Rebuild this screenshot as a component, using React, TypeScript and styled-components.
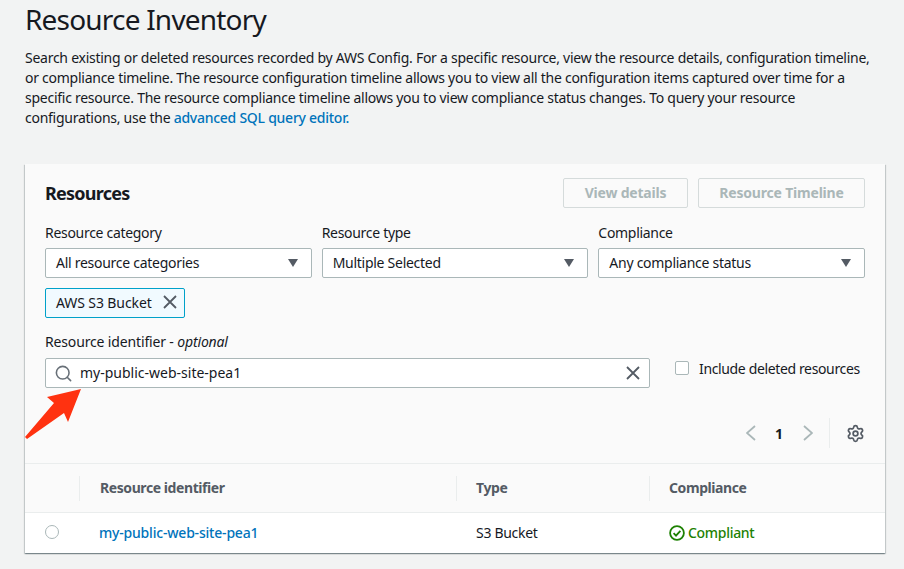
import React from 'react';
import styled, { createGlobalStyle } from 'styled-components';
import { Search, Settings } from 'lucide-react';

const GlobalStyle = createGlobalStyle`
  html, body {
    margin: 0;
    height: 569px;
    overflow: hidden;
    background: #f2f3f3;
    font-family: "Noto Sans", "Open Sans", sans-serif;
    font-size: 14px;
    color: #16191f;
  }
`;

const Page = styled.div`
  position: relative;
  width: 904px;
  height: 569px;
  padding: 0 19px 0 25px;
  box-sizing: border-box;
  overflow: hidden;
`;

const Title = styled.h1`
  margin: -1px 0 0;
  font-size: 28px;
  font-weight: 400;
  line-height: 40px;
  letter-spacing: -0.8px;
  color: #16191f;
`;

const Intro = styled.p`
  margin: 9px 0 0;
  width: 860px;
  font-size: 14px;
  line-height: 20px;
  letter-spacing: -0.26px;
`;

const Link = styled.a`
  color: #0073bb;
  font-weight: 500;
`;

const Card = styled.section`
  margin-top: 36px;
  width: 860px;
  background: #fafafa;
  box-shadow: 0 1px 1px 0 rgba(0, 28, 36, 0.3), 1px 1px 1px 0 rgba(0, 28, 36, 0.15), -1px 1px 1px 0 rgba(0, 28, 36, 0.15);
`;

const Filters = styled.div`
  padding: 14px 20px 0;
`;

const HeaderRow = styled.div`
  display: flex;
  justify-content: space-between;
  align-items: center;
`;

const CardTitle = styled.h2`
  margin: 0;
  font-size: 18px;
  font-weight: 700;
  line-height: 30px;
  letter-spacing: -0.75px;
`;

const Actions = styled.div`
  display: flex;
  gap: 10px;
`;

const DisabledButton = styled.button<{ $width: number }>`
  height: 30px;
  width: ${(p) => p.$width}px;
  padding: 0 0 2px;
  background: #fafafa;
  border: 1px solid #d5dbdb;
  border-radius: 2px;
  color: #aab7b8;
  font: 700 14px "Noto Sans", sans-serif;
  letter-spacing: -0.2px;
`;

const SelectGrid = styled.div`
  display: grid;
  grid-template-columns: repeat(3, 1fr);
  gap: 10px;
  margin-top: 15px;
`;

const Field = styled.div`
  display: flex;
  flex-direction: column;
`;

const Label = styled.label`
  font-size: 14px;
  line-height: 20px;
  margin-bottom: 5px;
  letter-spacing: -0.3px;
`;

const SearchLabel = styled(Label)`
  margin-bottom: 6px;
  letter-spacing: -0.15px;
`;

const Select = styled.div`
  display: flex;
  align-items: center;
  justify-content: space-between;
  height: 30px;
  box-sizing: border-box;
  padding: 0 10px 2px;
  background: #fff;
  border: 1px solid #aab7b8;
  border-radius: 2px;
  letter-spacing: -0.27px;
`;

const Caret = styled.span`
  width: 0;
  height: 0;
  margin: 2px 3px 0 0;
  border-left: 5.5px solid transparent;
  border-right: 5.5px solid transparent;
  border-top: 8px solid #545b64;
`;

const Token = styled.div`
  display: inline-flex;
  align-items: center;
  gap: 11px;
  height: 30px;
  box-sizing: border-box;
  margin-top: 10px;
  padding: 0 7px 2px 10px;
  background: #f1faff;
  border: 1px solid #00a1c9;
  border-radius: 2px;
  letter-spacing: -0.1px;
`;

const SearchRow = styled.div`
  display: flex;
  align-items: flex-end;
  margin-top: 14px;
`;

const SearchField = styled(Field)`
  width: 605px;
  flex: none;
`;

const SearchBox = styled.div`
  display: flex;
  align-items: center;
  height: 30px;
  box-sizing: border-box;
  padding: 0 9px 0 8px;
  gap: 7px;
  background: #fff;
  border: 1px solid #aab7b8;
  border-radius: 2px;
  color: #16191f;
`;

const SearchText = styled.span`
  flex: 1;
  padding-bottom: 2px;
`;

const CheckRow = styled.div`
  display: flex;
  align-items: center;
  flex: none;
  gap: 10px;
  height: 20px;
  margin: 0 0 10px 25px;
  letter-spacing: -0.36px;
  white-space: nowrap;
`;

const Checkbox = styled.span`
  width: 14px;
  height: 14px;
  box-sizing: border-box;
  background: #fff;
  border: 1px solid #aab7b8;
  border-radius: 2px;
`;

const Pager = styled.div`
  display: flex;
  justify-content: flex-end;
  align-items: center;
  height: 30px;
  margin-top: 30px;
`;

const PageNumber = styled.span`
  font-weight: 700;
  margin: 0 20px 0 19px;
`;

const PagerDivider = styled.span`
  width: 1px;
  height: 30px;
  margin: 0 16px;
  background: #eaeded;
`;

const Table = styled.table`
  width: 100%;
  margin-top: 15px;
  border-collapse: collapse;
  table-layout: fixed;
`;

const Th = styled.th<{ $width?: number }>`
  width: ${(p) => (p.$width ? `${p.$width}px` : 'auto')};
  height: 49px;
  padding: 0 20px 2px;
  box-sizing: border-box;
  border-top: 1px solid #eaeded;
  border-bottom: 1px solid #eaeded;
  text-align: left;
  color: #545b64;
  font-size: 14px;
  font-weight: 700;
  letter-spacing: -0.42px;
  position: relative;
  &:nth-child(2) {
    padding-left: 21px;
  }
  &:not(:first-child)::before {
    content: '';
    position: absolute;
    left: 0;
    top: 12px;
    height: 25px;
    width: 1px;
    background: #eaeded;
  }
`;

const Td = styled.td`
  height: 40px;
  box-sizing: border-box;
  padding: 0 20px 1px;
  background: #fff;
  letter-spacing: -0.3px;
`;

const Radio = styled.span`
  display: block;
  width: 14px;
  height: 14px;
  box-sizing: border-box;
  background: #fff;
  border: 1px solid #aab7b8;
  border-radius: 50%;
`;

const RowLink = styled(Link)`
  letter-spacing: -0.2px;
`;

const Status = styled.span`
  display: flex;
  align-items: center;
  gap: 3px;
  margin-top: 1px;
  color: #1d8102;
  font-weight: 500;
`;

const Arrow = styled.svg`
  position: absolute;
  left: 23px;
  top: 386px;
`;

const CloseIcon = ({ size }: { size: number }) => (
  <svg width={size} height={size} viewBox="0 0 14 14" fill="none" stroke="#545b64" strokeWidth="1.8">
    <path d="M1 1l12 12M13 1L1 13" />
  </svg>
);

const PagerChevron = ({ flip }: { flip?: boolean }) => (
  <svg width="10" height="16" viewBox="0 0 10 16" fill="none" stroke="#aab7b8" strokeWidth="1.8">
    <path d={flip ? 'M1 1l8 7-8 7' : 'M9 1L1 8l8 7'} />
  </svg>
);

export default function App() {
  return (
    <Page>
      <GlobalStyle />
      <Title>Resource Inventory</Title>
      <Intro>
        Search existing or deleted resources recorded by AWS Config. For a specific resource, view the resource details, configuration timeline,
        or compliance timeline. The resource configuration timeline allows you to view all the configuration items captured over time for a
        specific resource. The resource compliance timeline allows you to view compliance status changes. To query your resource
        configurations, use the <Link>advanced SQL query editor.</Link>
      </Intro>
      <Card>
        <Filters>
          <HeaderRow>
            <CardTitle>Resources</CardTitle>
            <Actions>
              <DisabledButton $width={125}>View details</DisabledButton>
              <DisabledButton $width={167}>Resource Timeline</DisabledButton>
            </Actions>
          </HeaderRow>
          <SelectGrid>
            <Field>
              <Label>Resource category</Label>
              <Select>All resource categories<Caret /></Select>
            </Field>
            <Field>
              <Label>Resource type</Label>
              <Select>Multiple Selected<Caret /></Select>
            </Field>
            <Field>
              <Label>Compliance</Label>
              <Select>Any compliance status<Caret /></Select>
            </Field>
          </SelectGrid>
          <Token>
            AWS S3 Bucket
            <CloseIcon size={14} />
          </Token>
          <SearchRow>
            <SearchField>
              <SearchLabel>Resource identifier - <em>optional</em></SearchLabel>
              <SearchBox>
                <Search size={19} color="#687078" strokeWidth={2} />
                <SearchText>my-public-web-site-pea1</SearchText>
                <CloseIcon size={14} />
              </SearchBox>
            </SearchField>
            <CheckRow>
              <Checkbox />
              Include deleted resources
            </CheckRow>
          </SearchRow>
          <Pager>
            <PagerChevron />
            <PageNumber>1</PageNumber>
            <PagerChevron flip />
            <PagerDivider />
            <Settings size={19} color="#545b64" strokeWidth={2.2} />
          </Pager>
        </Filters>
        <Table>
          <thead>
            <tr>
              <Th $width={54} />
              <Th $width={377}>Resource identifier</Th>
              <Th $width={193}>Type</Th>
              <Th>Compliance</Th>
            </tr>
          </thead>
          <tbody>
            <tr>
              <Td><Radio /></Td>
              <Td><RowLink>my-public-web-site-pea1</RowLink></Td>
              <Td>S3 Bucket</Td>
              <Td>
                <Status>
                  <svg width="16" height="16" viewBox="0 0 16 16" fill="none" stroke="#1d8102" strokeWidth="1.8">
                    <circle cx="8" cy="8" r="6.9" />
                    <path d="M4.6 8.2l2.4 2.4 4.4-4.8" />
                  </svg>
                  Compliant
                </Status>
              </Td>
            </tr>
          </tbody>
        </Table>
      </Card>
      <Arrow width="62" height="56" viewBox="0 0 62 56">
        <path d="M58 3L24 11l7 6L2 51l2 2 37-26 4 9z" fill="#ff3210" />
      </Arrow>
    </Page>
  );
}
